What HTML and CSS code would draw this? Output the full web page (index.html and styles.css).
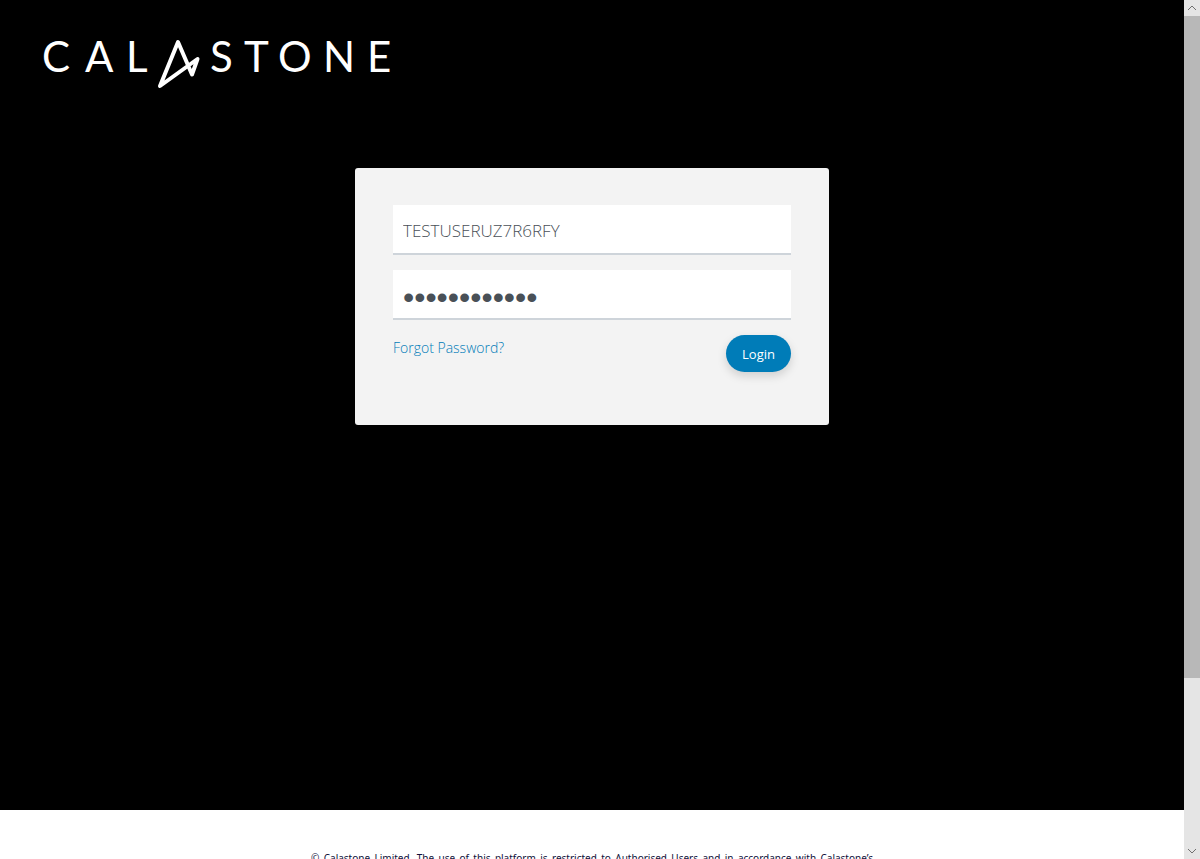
FILE: index.html
```html
<!DOCTYPE html>
<html lang="en">
<head>
<meta charset="utf-8">
<meta name="viewport" content="width=device-width, initial-scale=1">
<title>Calastone</title>
<link rel="stylesheet" href="styles.css">
</head>
<body>
<div class="window">
  <div class="page">
    <main class="hero">
      <header class="header">
        <svg class="logo" viewBox="0 0 356 64" role="img" aria-label="Calastone">
          <text class="logo-text" y="44" x="2 45 86">CAL</text>
          <text class="logo-text" y="44" x="170 204 238 283 327">STONE</text>
          <path class="logo-mark" d="M120 58 138 14 152 46.500 157.500 31Z"/>
        </svg>
      </header>
      <form class="card">
        <input class="field" type="text" aria-label="Username" value="TESTUSERUZ7R6RFY">
        <input class="field field-password" type="password" aria-label="Password" value="############">
        <div class="actions">
          <a class="forgot" href="#">Forgot Password?</a>
          <button class="login" type="button">Login</button>
        </div>
      </form>
    </main>
    <footer class="footer">
      <p class="legal">© Calastone Limited. The use of this platform is restricted to Authorised Users and in accordance with Calastone’s</p>
    </footer>
  </div>
  <div class="scrollbar" aria-hidden="true">
    <svg class="arrow" viewBox="0 0 16 16"><path d="M4 10 8 6 12 10"/></svg>
    <div class="track"><div class="thumb"></div></div>
    <svg class="arrow" viewBox="0 0 16 16"><path d="M4 6 8 10 12 6"/></svg>
  </div>
</div>
</body>
</html>
```

FILE: styles.css
```css
* { box-sizing: border-box; }

body {
  margin: 0;
  font-family: "Open Sans", "Noto Sans", sans-serif;
  background: #fff;
}

.window {
  display: flex;
  height: 100vh;
  overflow: hidden;
}

.page {
  flex: 1;
  min-width: 0;
  overflow: hidden;
}

.hero {
  min-height: 810px;
  padding: 28px 40px;
  background: #000;
}

.logo {
  display: block;
  width: 356px;
  max-width: 100%;
  height: 64px;
}

.logo-text {
  font-family: Lato, sans-serif;
  font-size: 42px;
  fill: #fff;
}

.logo-mark {
  fill: none;
  stroke: #fff;
  stroke-width: 4;
  stroke-linejoin: round;
}

.card {
  display: flex;
  flex-direction: column;
  gap: 15px;
  max-width: 474px;
  margin: 76px auto 0;
  padding: 37px 38px 53px;
  border-radius: 3px;
  background: #f3f3f3;
}

.field {
  width: 100%;
  height: 50px;
  padding: 2px 10px 0;
  border: 0;
  border-bottom: 2px solid #ced4da;
  border-radius: 0;
  outline: 0;
  background: #fff;
  color: #495057;
  font-family: inherit;
  font-size: 17px;
  font-weight: 300;
}

.field-password {
  padding-top: 6px;
  font-family: "Liberation Sans", sans-serif;
  font-size: 32px;
}

.actions {
  display: flex;
  justify-content: space-between;
  align-items: flex-start;
}

.forgot {
  padding-top: 3px;
  color: #007cb8;
  font-size: 14px;
  font-weight: 300;
  line-height: 20px;
  text-decoration: none;
}

.login {
  height: 37px;
  padding: 0 16px;
  border: 0;
  border-radius: 19px;
  background: #007cb8;
  box-shadow: 0 4px 10px rgba(0, 0, 0, .15);
  color: #fff;
  font-family: inherit;
  font-size: 13px;
}

.footer { padding: 40px 16px; }

.legal {
  max-width: 562px;
  margin: 0 auto;
  color: #10103a;
  font-family: "Noto Sans", sans-serif;
  font-size: 10px;
  line-height: 16px;
  text-align: justify;
  text-align-last: justify;
}

.scrollbar {
  display: flex;
  flex-direction: column;
  width: 16px;
  background: #e5e5e5;
}

.arrow {
  width: 16px;
  height: 16px;
  fill: none;
  stroke: #707070;
  stroke-width: 1;
}

.track { flex: 1; }

.thumb {
  height: 80%;
  background: #b8b8b8;
}
```
